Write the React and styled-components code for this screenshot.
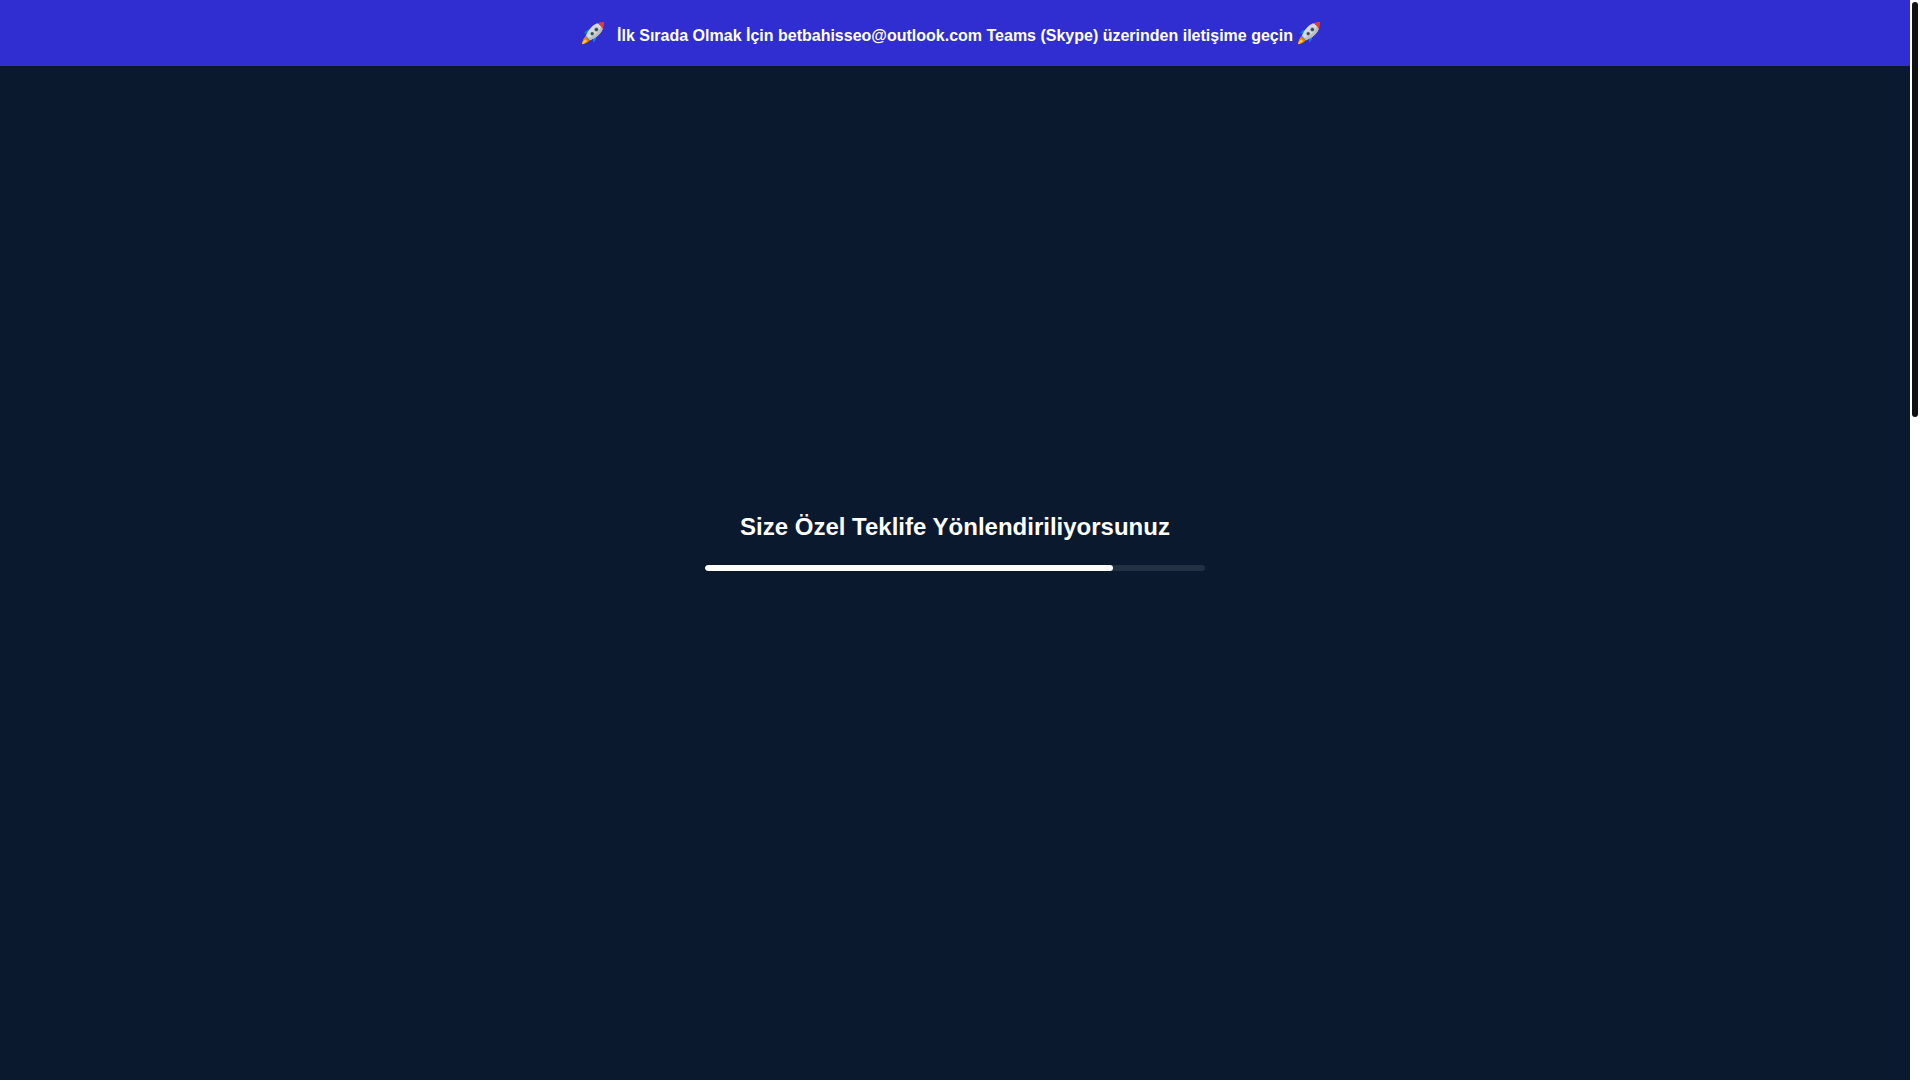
import React from "react";
import styled, { createGlobalStyle } from "styled-components";

const GlobalStyle = createGlobalStyle`
  *, *::before, *::after { box-sizing: border-box; }
  body {
    margin: 0;
    overflow: hidden;
    background: #0a192e;
    color: #fff;
    font-family: "Liberation Sans", Arial, sans-serif;
  }
`;

const Shell = styled.div`
  display: flex;
  height: 100vh;
`;

const Page = styled.div`
  flex: 1;
  min-width: 0;
  display: flex;
  flex-direction: column;
`;

const Banner = styled.header`
  display: flex;
  justify-content: center;
  align-items: center;
  height: 66px;
  padding-right: 8px;
  background: #302dd1;
`;

const BannerText = styled.p`
  margin: 6px 4px 0 12px;
  font-size: 16px;
  line-height: 24px;
  font-weight: 700;
  white-space: nowrap;
`;

const RocketIcon = styled.svg`
  flex: none;
  width: 24px;
  height: 24px;
`;

const Loader = styled.main`
  flex: 1;
  display: flex;
  flex-direction: column;
  align-items: center;
  justify-content: center;
  gap: 20px;
  padding-bottom: 66px;
`;

const Title = styled.h1`
  margin: 0;
  font-size: 24px;
  line-height: 36px;
  font-weight: 700;
`;

const Track = styled.div`
  width: 500px;
  max-width: 100%;
  height: 6px;
  border-radius: 3px;
  overflow: hidden;
  background: rgba(255, 255, 255, 0.1);
`;

const Fill = styled.div`
  height: 100%;
  border-radius: 3px;
  background: #fff;
`;

const ScrollRail = styled.div`
  width: 10px;
  padding: 2px;
  background: #fff;
`;

const ScrollThumb = styled.div`
  height: 38.4vh;
  border-radius: 3px;
  background: #111;
`;

function Rocket() {
  return (
    <RocketIcon viewBox="0 0 24 24" aria-hidden="true">
      <path d="M10 9 C7 8.4 4.5 9.4 3 12.6 L8.5 12.6 Z" fill="#0288d1" />
      <path d="M15 14 C15.8 17 14.8 19.8 12.2 21.4 L11.6 16 Z" fill="#0288d1" />
      <path d="M4.6 15.6 C2.3 17 1.4 20 1 23.2 C4 22.8 7 21.6 8.4 19.4 Z" fill="#f57c00" />
      <path d="M4.2 18.2 C2.6 19.4 1.5 21.2 1 23.2 C3.2 22.6 5 21.5 6.2 20 Z" fill="#ffca28" />
      <path d="M4.3 15.2 L8.8 19.7 L10 18.8 L5.2 14 Z" fill="#82aec0" />
      <path d="M5 14.6 C7 9 12 3.2 17 1.9 L22.1 7 C20.8 12 15 17 9.4 19 Z" fill="#d6d8da" />
      <path d="M22 6.6 C21 12 15 17 9.4 19 L7.6 17.2 C13 15 18.5 11 20 5 Z" fill="#b8bec2" />
      <path d="M16 2.2 C18.4 1.1 21 .9 23.1 .9 C23.1 3.2 22.8 5.8 21.7 8.1 C20.6 5.4 18.6 3.3 16 2.2 Z" fill="#e53935" />
      <circle cx="15.4" cy="8.5" r="2.2" fill="#90a4ae" />
      <circle cx="15.4" cy="8.5" r="1.6" fill="#37474f" />
      <circle cx="11.2" cy="12.7" r="2" fill="#90a4ae" />
      <circle cx="11.2" cy="12.7" r="1.4" fill="#37474f" />
    </RocketIcon>
  );
}

export default function App() {
  const progress = 81.6;
  return (
    <>
      <GlobalStyle />
      <Shell>
        <Page>
          <Banner>
            <Rocket />
            <BannerText>
              İlk Sırada Olmak İçin betbahisseo@outlook.com Teams (Skype) üzerinden iletişime geçin
            </BannerText>
            <Rocket />
          </Banner>
          <Loader>
            <Title>Size Özel Teklife Yönlendiriliyorsunuz</Title>
            <Track
              role="progressbar"
              aria-label="Yönlendirme"
              aria-valuemin={0}
              aria-valuemax={100}
              aria-valuenow={progress}
            >
              <Fill style={{ width: `${progress}%` }} />
            </Track>
          </Loader>
        </Page>
        <ScrollRail aria-hidden="true">
          <ScrollThumb />
        </ScrollRail>
      </Shell>
    </>
  );
}
